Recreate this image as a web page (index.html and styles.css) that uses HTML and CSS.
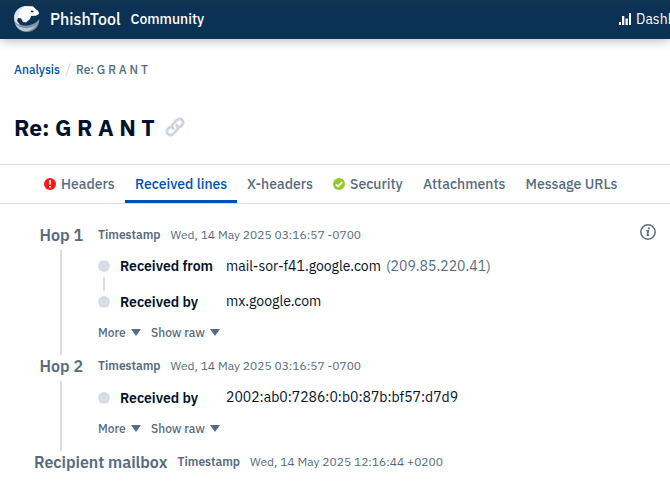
FILE: index.html
```html
<!DOCTYPE html>
<html lang="en">
<head>
<meta charset="utf-8">
<title>PhishTool Community</title>
<link rel="stylesheet" href="styles.css">
</head>
<body>
<header class="topbar">
  <svg class="logo" viewBox="0 0 26 26">
    <path d="M0 12C2 18 9 21 16 19C20 18 23 16 25.500 13C25 21 20 26 13 26C5 26 0 20 0 12Z" fill="#7d91a8"/>
    <path d="M1 17C6 23 15 24 22 19C17 27 5 28 1 17Z" fill="#bcc7d3"/>
    <path d="M0 12C0 5 5 1 11 0L19 .5L21 3L24 5L25 8L22 9.500L17 10L16 13L12 16.500L9 16L7 12.500L4 12L3 15L6 18.500C2 18 0 15 0 12Z" fill="#dfe4ea"/>
    <path d="M6 4L11 .5L16 .5L19 .5L21 2.500L24 5L25 7.500L22 9.500L17 9.500L15 13L11 16L8 12L4 11Z" fill="#fff"/>
    <path d="M17 4.700h2.500v1.600H17z" fill="#0b3155"/>
  </svg>
  <span class="brand">PhishTool</span>
  <span class="edition">Community</span>
  <a class="dash"><svg viewBox="0 0 12 12" width="12" height="12"><path d="M0 9h2v3H0zM3 3h2.300v9H3zM6.500 5.500h2.300V12H6.500zM10 0h2v12h-2z" fill="#fff"/></svg><span>Dashboard</span></a>
</header>
<nav class="crumbs"><a class="crumb-link">Analysis</a><svg class="slash" viewBox="0 0 6 14"><path d="M5.200.5L.8 13.500" stroke="#d9dee6" stroke-width="1.300"/></svg><span class="crumb-now">Re: G R A N T</span></nav>
<div class="heading">
  <h1>Re: G R A N T</h1>
  <svg class="link" viewBox="0 0 20 20" fill="none" stroke="#cfd5de" stroke-width="2.800" stroke-linecap="round"><path d="M8.300 11.700C6.600 10 6.700 8.200 8 6.900L12 2.900C13.300 1.600 15.500 1.400 17 2.900C18.500 4.400 18.400 6.600 17.100 7.900L14.900 10.100"/><path d="M11.700 8.300C13.400 10 13.300 11.800 12 13.100L8 17.100C6.700 18.400 4.500 18.600 3 17.100C1.500 15.600 1.600 13.400 2.900 12.100L5.100 9.900"/></svg>
</div>
<nav class="tabs">
  <a class="tab t1"><svg viewBox="0 0 12 12"><circle cx="6" cy="6" r="6" fill="#fa1919"/><path d="M5 2.200h2l-.3 4.600H5.300zM5.100 7.900h1.800v1.700H5.100z" fill="#fff"/></svg><span>Headers</span></a>
  <a class="tab t2 active"><span>Received lines</span></a>
  <a class="tab t3"><span>X-headers</span></a>
  <a class="tab t4"><svg viewBox="0 0 12 12"><circle cx="6" cy="6" r="6" fill="#95c832"/><path d="M2.800 6.200L5 8.400L9.300 4.100" fill="none" stroke="#fff" stroke-width="1.600"/></svg><span>Security</span></a>
  <a class="tab t5"><span>Attachments</span></a>
  <a class="tab t6"><span>Message URLs</span></a>
</nav>
<main>
  <svg class="info" viewBox="0 0 16 16"><circle cx="8" cy="8" r="7.200" fill="none" stroke="#566b80" stroke-width="1.500"/><path d="M6.200 6.700H8.300L7.400 11.300H9.200" fill="none" stroke="#566b80" stroke-width="1.500"/><circle cx="8.800" cy="4.300" r="1.100" fill="#566b80"/></svg>
  <section class="hop hop-one">
    <div class="rail"><h2>Hop 1</h2><i class="line"></i></div>
    <div class="body">
      <div class="time"><b>Timestamp</b><span>Wed, 14 May 2025 03:16:57 -0700</span></div>
      <div class="entry"><i class="dot"></i><strong>Received from</strong><span>mail-sor-f41.google.com</span><span class="ip">(209.85.220.41)</span></div>
      <i class="joint"></i>
      <div class="entry"><i class="dot"></i><strong>Received by</strong><span class="lifted">mx.google.com</span></div>
      <div class="actions"><a class="more">More</a><i class="arrow"></i><a class="raw">Show raw</a><i class="arrow"></i></div>
    </div>
  </section>
  <section class="hop hop-two">
    <div class="rail"><h2>Hop 2</h2><i class="line"></i></div>
    <div class="body">
      <div class="time"><b>Timestamp</b><span>Wed, 14 May 2025 03:16:57 -0700</span></div>
      <div class="entry"><i class="dot"></i><strong>Received by</strong><span class="lifted">2002:ab0:7286:0:b0:87b:bf57:d7d9</span></div>
      <div class="actions"><a class="more">More</a><i class="arrow"></i><a class="raw">Show raw</a><i class="arrow"></i></div>
    </div>
  </section>
  <section class="mailbox"><h2>Recipient mailbox</h2><div class="time"><b>Timestamp</b><span>Wed, 14 May 2025 12:16:44 +0200</span></div></section>
</main>
</body>
</html>
```
FILE: styles.css
```css
* { box-sizing: border-box; }
html, body { margin: 0; overflow: hidden; }
body { height: 494px; background: #fff; color: #00112b; font-family: "IBM Plex Sans", Roboto, sans-serif; white-space: nowrap; }
h1, h2 { margin: 0; }
svg, i { display: block; flex: none; }
.topbar { height: 39px; display: flex; align-items: center; padding: 0 0 1px 14px; color: #fff; background: linear-gradient(#123650, #0b3155 10px); box-shadow: 0 2px 10px rgba(0,17,43,.28); }
.logo { width: 26px; height: 26px; }
.brand { width: 71px; margin-left: 10px; font-size: 16px; font-weight: 500; }
.edition { width: 74px; margin-left: 9.500px; font-size: 14px; font-weight: 500; }
.dash { margin-left: 414.500px; width: 51px; overflow: hidden; display: flex; align-items: center; gap: 5px; font-size: 14px; }
.brand, .edition, .dash { flex: none; }
.crumbs { height: 62px; display: flex; align-items: center; padding: 0 0 1px 14px; font-size: 12px; font-weight: 500; color: #566b80; }
.crumb-link { width: 47px; color: #0051b3; }
.slash { width: 6px; height: 14px; margin: 0 5px 0 4px; }
.heading { height: 63px; padding: 0 0 11px 14px; display: flex; align-items: center; }
h1 { width: 151px; font-size: 23px; font-weight: 700; }
.link { width: 20px; height: 20px; }
.tabs { height: 40px; display: flex; border-top: 1px solid #d9dee6; border-bottom: 1px solid #d9dee6; }
.tab { height: 38px; display: flex; align-items: center; gap: 5px; color: #566b80; font-size: 14px; font-weight: 500; }
.tab svg { width: 12px; height: 12px; }
.t1 { width: 81px; margin-left: 44px; }
.t2 { width: 112px; padding-left: 10px; }
.t3 { width: 96px; padding-left: 10px; }
.t4 { width: 90px; }
.t5 { width: 102.500px; }
.active { color: #0051b3; border-bottom: 3px solid #0051b3; padding-top: 3px; }
main { position: relative; padding-top: 21px; color: #00112b; }
.info { position: absolute; left: 640px; top: 20px; width: 16px; height: 16px; }
.hop { display: flex; }
.hop-one { height: 131px; }
.hop-two { height: 96px; }
.rail { width: 98px; padding-left: 39px; }
h2 { height: 20px; line-height: 20px; font-size: 16px; font-weight: 600; color: #566b80; }
.rail h2 { padding-left: .5px; }
.line { width: 2px; margin: 5px 0 0 21px; background: #d9dee6; }
.hop-one .line { height: 105px; }
.hop-two .line { height: 70px; }
.time { height: 20px; padding-bottom: 1px; display: flex; align-items: center; font-size: 12px; color: #566b80; }
.time b { width: 72.500px; font-weight: 600; }
.entry { height: 12px; margin-top: 15px; display: flex; align-items: center; font-size: 14px; }
.hop-two .entry { margin-top: 16px; }
.dot { width: 12px; height: 12px; border-radius: 50%; background: #d9dee6; margin-right: 10px; }
.entry strong { width: 106px; font-weight: 600; }
.ip { margin-left: 5px; color: #566b80; }
.joint { width: 2px; height: 14px; margin: 5px 0 0 5px; background: #d9dee6; }
.joint + .entry { margin-top: 5px; }
.lifted { padding-bottom: 3px; }
.actions { display: flex; align-items: center; height: 20px; margin-top: 14px; color: #566b80; font-size: 12px; font-weight: 500; }
.hop-two .actions { margin-top: 14px; }
.more { width: 33px; }
.raw { width: 59px; margin-left: 10px; }
.arrow { border: 5px solid transparent; border-top: 7px solid #566b80; border-bottom: 0; }
.mailbox { display: flex; padding-left: 34px; }
.mailbox h2 { width: 143.500px; }
```
